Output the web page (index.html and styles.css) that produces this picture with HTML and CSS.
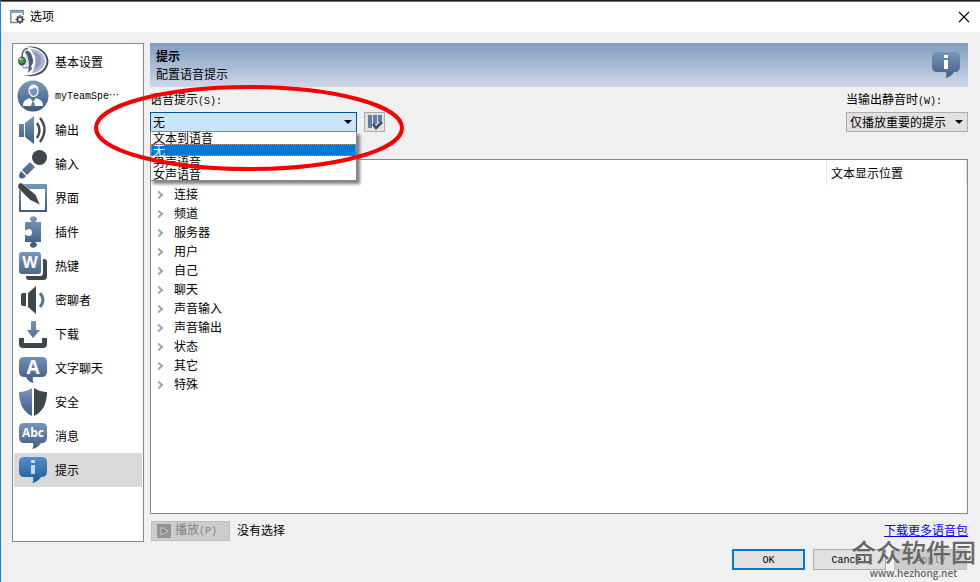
FILE: index.html
```html
<!DOCTYPE html>
<html lang="zh-CN">
<head>
    <meta charset="UTF-8">
    <meta name="viewport" content="width=device-width, initial-scale=1.0">
    <title>选项</title>
    <link rel="stylesheet" href="styles.css">
</head>
<body>
    <svg class="defs" aria-hidden="true">
        <defs>
            <linearGradient id="blue" x1="0" y1="0" x2="0" y2="32" gradientUnits="userSpaceOnUse">
                <stop offset="0" stop-color="#7d9bc1"/>
                <stop offset="1" stop-color="#39597b"/>
            </linearGradient>
            <linearGradient id="bright" x1="0" y1="0" x2="0" y2="32" gradientUnits="userSpaceOnUse">
                <stop offset="0" stop-color="#5b96cd"/>
                <stop offset="1" stop-color="#15548e"/>
            </linearGradient>
        </defs>
    </svg>

    <div class="window">
        <header class="titlebar">
            <svg class="title-icon" viewBox="0 0 15 14">
                <path d="M7 12.5H.8V.8h12.4V5" fill="none" stroke="#6485aa" stroke-width="1.4"/>
                <path d="M1 1h12v2H1z" fill="#8aa4c3"/>
                <circle cx="10" cy="9.5" r="2.5" fill="none" stroke="#414a50" stroke-width="1.6"/>
                <path d="M10 5v1.5M10 12.5V14M5.5 9.5H7M13 9.5h1.5M7 6.5l1 1M12 11.5l1 1M13 6.5l-1 1M8 11.5l-1 1" stroke="#414a50" stroke-width="1.5"/>
            </svg>
            <span class="title-text">选项</span>
            <button class="close" type="button" aria-label="关闭">
                <svg viewBox="0 0 12 12"><path d="M1 1l10 10M11 1L1 11" stroke="#000" stroke-width="1.1"/></svg>
            </button>
        </header>

        <div class="content">
            <nav class="sidebar">
                <button class="item" type="button">
                    <svg viewBox="0 0 32 32">
                        <path d="M10 1C20-1 31 5 31.500 15c0 11-12 18-25 14 12 1 23-4 23-14C29 6 20 1 10 1z" fill="#434d54"/>
                        <path d="M13 3c9 0 15 5 15 12 0 6-5 11-13 12l2-5c2-6 2-13-4-19z" fill="#aeb3cf"/>
                        <path d="M16 6c6 1 9 5 8 10-1 4-4 6-7 7 3-6 3-12-1-17z" fill="#8d96b8"/>
                        <path d="M5 11C5 5 8 2 11 2.500" fill="none" stroke="#59697c" stroke-width="1.500"/>
                        <path d="M8 6c2-3 6 0 7 4 1 3 2 6 0 9l-1 1 1 3-4 4c1-7 2-13-3-21z" fill="#4c5c70"/>
                        <path d="M9 8c2 4 1 9 0 14" fill="none" stroke="#c9cee0" stroke-width="1.500"/>
                        <ellipse cx="5" cy="15" rx="4" ry="4.500" fill="#46504f"/>
                        <circle cx="4.500" cy="14.500" r="3" fill="#38a349"/>
                        <circle cx="3.500" cy="13" r="1.200" fill="#b6e4b1"/>
                        <path d="M5 19c1 3 3 4 7 2" fill="none" stroke="#59697c"/>
                    </svg>
                    <span>基本设置</span>
                </button>
                <button class="item" type="button">
                    <svg viewBox="0 0 32 32">
                        <circle cx="16" cy="16" r="15.5" fill="url(#blue)"/>
                        <path d="M12 10c0-6 9-6 9 0 0 4-2 6-4 6.500-3 0-5-3-5-6.500z" fill="#7895b9" stroke="#fff" stroke-width="1.2"/>
                        <path d="M12 9c3 1 5-1 6-2 1 2 2 2 3 2-1-6-8-6-9 0z" fill="#fff"/>
                        <path d="M6 26c0-5 2-6 7-8l3 4 3-4c5 2 7 3 7 8z" fill="#fff"/>
                        <path d="M15 22h2l1 4h-4z" fill="#5b7ca3"/>
                    </svg>
                    <span class="latin">myTeamSpe&#8943;</span>
                </button>
                <button class="item" type="button">
                    <svg viewBox="0 0 32 32">
                        <path d="M2 10h5v13H2zM8 9l9-7v28l-9-7z" fill="url(#blue)"/>
                        <path d="M20 9q5 7 0 15M23 4q9 11 0 24" fill="none" stroke="#41494d" stroke-width="2.4"/>
                    </svg>
                    <span>输出</span>
                </button>
                <button class="item" type="button">
                    <svg viewBox="0 0 32 32">
                        <circle cx="22.5" cy="9.5" r="7.5" fill="#3f474b"/>
                        <path d="M13 14l5 5-8 8-5-5z" fill="url(#blue)"/>
                        <path d="M4 23l5 5-1 1c-4 4-8-1-5-4z" fill="#446486"/>
                    </svg>
                    <span>输入</span>
                </button>
                <button class="item" type="button">
                    <svg viewBox="0 0 32 32">
                        <path d="M2 2h28v28H2zM4 7v21h24V7z" fill="url(#blue)" fill-rule="evenodd"/>
                        <path d="M1 4c0-3 3-4 5-2l13 11 4 10-10-5L2 7C1 6 1 5 1 4z" fill="#3f474b" stroke="#fff" stroke-width=".5"/>
                    </svg>
                    <span>界面</span>
                </button>
                <button class="item" type="button">
                    <svg viewBox="0 0 32 32">
                        <path d="M8 6h6c1-1 0-1-1-2-1-5 8-5 7 0-1 1-2 1-1 2h5v20h-5c-1 1 0 1 1 2 0 5-8 5-7 0 1-1 2-1 1-2H8v-7c1-1 2 1 4 1 4 0 4-7 0-7-2 0-3 2-4 1z" fill="url(#blue)"/>
                    </svg>
                    <span>插件</span>
                </button>
                <button class="item" type="button">
                    <svg viewBox="0 0 32 32">
                        <path d="M26 9h1c2 0 3 1 3 3v14c0 3-1 4-4 4H12c-2 0-3-1-3-3v-1h14c2 0 3-1 3-3z" fill="#3f474b"/>
                        <rect x="2" y="2" width="22" height="22" rx="3" fill="url(#blue)"/>
                        <text class="glyph" x="13" y="18" font-size="16">W</text>
                    </svg>
                    <span>热键</span>
                </button>
                <button class="item" type="button">
                    <svg viewBox="0 0 32 32">
                        <path d="M6 9h3v13H6q-2 0-2-2v-9q0-2 2-2zM11 9l8-7v28l-8-7z" fill="#3f474b"/>
                        <path d="M23 9q6 7 0 14" fill="none" stroke="#54759b" stroke-width="3"/>
                    </svg>
                    <span>密聊者</span>
                </button>
                <button class="item" type="button">
                    <svg viewBox="0 0 32 32">
                        <path d="M14 4q0-1 1-1h3q1 0 1 1v8h4l-7 8-6-8h4z" fill="url(#blue)"/>
                        <path d="M2 20h5v5h18v-5h5v6q0 4-4 4H6q-4 0-4-4z" fill="#3f474b"/>
                    </svg>
                    <span>下载</span>
                </button>
                <button class="item" type="button">
                    <svg viewBox="0 0 32 32">
                        <path d="M7 5h18q5 0 5 5v9q0 6-5 6h-9q-1 4 1 6-6-1-8-6H7q-5 0-5-6v-9q0-5 5-5z" fill="url(#blue)"/>
                        <text class="glyph" x="16" y="22" font-size="19">A</text>
                    </svg>
                    <span>文字聊天</span>
                </button>
                <button class="item" type="button">
                    <svg viewBox="0 0 32 32">
                        <path d="M15 2v28C6 26 2 17 2 6q7 0 13-4z" fill="url(#blue)"/>
                        <path d="M17 2v28c9-4 13-13 13-24q-7 0-13-4z" fill="#3f474b"/>
                    </svg>
                    <span>安全</span>
                </button>
                <button class="item" type="button">
                    <svg viewBox="0 0 32 32">
                        <path d="M7 3h18q5 0 5 5v9q0 6-5 6h-1q-3 5-9 6 2-2 1-6H7q-5 0-5-6V8q0-5 5-5z" fill="url(#blue)"/>
                        <text class="glyph" x="16" y="17" font-size="12">Abc</text>
                    </svg>
                    <span>消息</span>
                </button>
                <button class="item selected" type="button">
                    <svg viewBox="0 0 32 32">
                        <path d="M7 3h18q5 0 5 5v9q0 6-5 6h-1q-3 5-9 6 2-2 1-6H7q-5 0-5-6V8q0-5 5-5z" fill="url(#bright)"/>
                        <path d="M14 6h4v3h-4zM14 11h4v9h-4z" fill="#b9dcf8"/>
                    </svg>
                    <span>提示</span>
                </button>
            </nav>

            <main class="panel">
                <div class="banner">
                    <div class="banner-text">
                        <h1>提示</h1>
                        <p>配置语音提示</p>
                    </div>
                    <svg class="banner-icon" viewBox="0 0 32 32">
                        <path d="M7 3h18q5 0 5 5v9q0 6-5 6h-1q-3 5-9 6 2-2 1-6H7q-5 0-5-6V8q0-5 5-5z" fill="url(#blue)"/>
                        <path d="M14 6h4v3h-4zM14 11h4v9h-4z" fill="#fff"/>
                    </svg>
                </div>

                <div class="options">
                    <div class="field">
                        <label for="pack">语音提示<span class="latin">(S):</span></label>
                        <div class="pack-row">
                            <div class="combo open">
                                <select id="pack">
                                    <option>文本到语音</option>
                                    <option selected>无</option>
                                    <option>男声语音</option>
                                    <option>女声语音</option>
                                </select>
                                <ul class="dropdown">
                                    <li>文本到语音</li>
                                    <li class="active">无</li>
                                    <li>男声语音</li>
                                    <li>女声语音</li>
                                </ul>
                            </div>
                            <button class="tool" type="button" aria-label="应用语音包">
                                <svg viewBox="0 0 16 16">
                                    <path d="M1 1h4v13H1zM6 1h4v9H6zM11 1h4v7h-4z" fill="#5f7fa5"/>
                                    <path d="M6 10l3 4 6-6" fill="none" stroke="#3f474b" stroke-width="2.5"/>
                                </svg>
                            </button>
                            <svg class="marker" viewBox="0 0 310 86" aria-hidden="true">
                                <ellipse cx="155" cy="43" rx="153" ry="41" fill="none" stroke="#f80000" stroke-width="4"/>
                            </svg>
                        </div>
                    </div>
                    <div class="field">
                        <label for="muted">当输出静音时<span class="latin">(W):</span></label>
                        <div class="combo">
                            <select id="muted">
                                <option>仅播放重要的提示</option>
                            </select>
                        </div>
                    </div>
                </div>

                <div class="tree">
                    <div class="tree-head">
                        <span class="col-name"></span>
                        <span class="col-text"></span>
                        <span class="col-place">文本显示位置</span>
                    </div>
                    <ul class="tree-rows">
                        <li>连接</li>
                        <li>频道</li>
                        <li>服务器</li>
                        <li>用户</li>
                        <li>自己</li>
                        <li>聊天</li>
                        <li>声音输入</li>
                        <li>声音输出</li>
                        <li>状态</li>
                        <li>其它</li>
                        <li>特殊</li>
                    </ul>
                </div>

                <div class="playbar">
                    <button class="play" type="button" disabled>
                        <svg viewBox="0 0 14 14">
                            <path d="M0 0h14v14H0z" fill="#949494"/>
                            <path d="M4 3l7 4-7 4z" fill="#858585" stroke="#c8c8c8"/>
                        </svg>
                        <span>播放<span class="latin">(P)</span></span>
                    </button>
                    <span>没有选择</span>
                    <a class="more" href="#">下载更多语音包</a>
                </div>
            </main>
        </div>

        <footer class="actions">
            <button class="btn default" type="button">OK</button>
            <button class="btn" type="button">Cancel</button>
            <button class="btn" type="button" disabled>Apply</button>
        </footer>

        <div class="watermark">
            <div class="mark-name">合众软件园</div>
            <div class="mark-url">www.hezhong.net</div>
        </div>
    </div>
</body>
</html>
```
FILE: styles.css
```css
* {
    box-sizing: border-box;
}

body {
    margin: 0;
    background: #f0f0f0;
    color: #000;
    font-family: "Liberation Sans", "Noto Sans CJK SC", sans-serif;
    font-size: 12px;
    line-height: 16px;
}

button, select {
    font: inherit;
    color: inherit;
}

ul, h1, p {
    margin: 0;
    padding: 0;
    list-style: none;
}

svg {
    display: block;
    flex: none;
}

.defs {
    position: absolute;
    width: 0;
    height: 0;
}

.latin {
    font-family: "Liberation Mono", "Noto Sans CJK SC", monospace;
    font-size: 10px;
}

.window {
    position: relative;
    display: flex;
    flex-direction: column;
    min-height: 100vh;
    border-top: 1px solid #1b1f2b;
    border-left: 1px solid #1883d7;
}

/* title bar */
.titlebar {
    display: flex;
    align-items: center;
    height: 31px;
    padding: 0 10px 0 9px;
    border-top: 1px solid #1883d7;
    background: #fff;
}

.title-icon {
    width: 15px;
    height: 14px;
}

.title-text {
    flex: 1;
    padding-left: 5px;
}

.close {
    padding: 0;
    border: 0;
    background: none;
}

.close svg {
    width: 12px;
    height: 12px;
}

.content {
    display: flex;
    flex: 1;
    gap: 6px;
    padding: 11px 12px 7px 11px;
}

/* category list */
.sidebar {
    flex: none;
    width: 132px;
    padding: 1px;
    border: 1px solid #828790;
    background: #fff;
}

.item {
    display: flex;
    align-items: center;
    gap: 6px;
    width: 100%;
    height: 34px;
    padding: 0 3px;
    border: 0;
    background: none;
    text-align: left;
    white-space: nowrap;
}

.item span {
    padding-top: 2px;
}

.item svg {
    width: 32px;
    height: 32px;
}

.item.selected {
    background: #d9d9d9;
}

.glyph {
    fill: #fff;
    font-family: "Open Sans", sans-serif;
    font-weight: bold;
    text-anchor: middle;
}

/* right side */
.panel {
    display: flex;
    flex: 1;
    flex-direction: column;
    min-width: 0;
}

.banner {
    display: flex;
    align-items: center;
    justify-content: space-between;
    height: 44px;
    padding: 0 6px;
    background: linear-gradient(#819dc0, #cdd8e7);
}

.banner-text {
    padding-top: 2px;
    line-height: 18px;
}

.banner h1 {
    font-size: 12px;
}

.banner-icon {
    width: 32px;
    height: 32px;
}

.options {
    display: flex;
    justify-content: space-between;
    padding-bottom: 27px;
}

.field label {
    display: block;
    height: 25px;
    line-height: 26px;
}

.pack-row {
    position: relative;
    display: flex;
    gap: 7px;
}

.combo {
    position: relative;
    width: 122px;
}

.combo select {
    display: block;
    width: 100%;
    height: 20px;
    padding: 2px 3px 0;
    border: 1px solid #adadad;
    border-radius: 0;
    background: #e1e1e1;
    appearance: none;
}

.combo::after {
    content: "";
    position: absolute;
    top: 8px;
    right: 5px;
    border: 4px solid transparent;
    border-top-color: #000;
    border-bottom: 0;
    pointer-events: none;
}

.combo.open {
    width: 207px;
}

.combo.open select {
    padding-left: 2px;
    border-color: #005499;
    background: #cce4f7;
}

.dropdown {
    position: absolute;
    z-index: 1;
    top: 19px;
    left: 0;
    width: 100%;
    border: 1px solid #828790;
    background: #fff;
    box-shadow: 3px 3px 3px #808080;
}

.dropdown li {
    height: 12px;
    padding: 0 2px;
    line-height: 14px;
}

.dropdown .active {
    background: #0078d7;
    outline: 1px dotted #ff8728;
    outline-offset: -1px;
    color: #fff;
}

.tool {
    display: grid;
    place-items: center;
    width: 21px;
    height: 20px;
    padding: 0;
    border: 1px solid #adadad;
    background: #e1e1e1;
}

.tool svg {
    width: 16px;
    height: 16px;
}

.marker {
    position: absolute;
    z-index: 2;
    top: -27px;
    left: -56px;
    width: 310px;
    height: 86px;
    pointer-events: none;
}

/* notification tree */
.tree {
    flex: 1;
    border: 1px solid #828790;
    background: #fff;
}

.tree-head {
    display: flex;
    height: 25px;
    line-height: 28px;
}

.tree-head span {
    border-right: 1px solid #e5e5e5;
}

.col-name, .col-place {
    width: 140px;
}

.col-text {
    flex: 1;
}

.col-place {
    padding-left: 4px;
}

.tree-rows li {
    display: flex;
    align-items: center;
    gap: 12px;
    height: 19px;
    padding-left: 5px;
}

.tree-rows li::before {
    content: "";
    width: 4px;
    height: 4px;
    border: solid #a6a6a6;
    border-width: 2px 2px 0 0;
    transform: rotate(45deg);
}

.playbar {
    display: flex;
    align-items: center;
    gap: 7px;
    padding: 7px 0 1px 1px;
}

.play {
    display: flex;
    align-items: center;
    gap: 4px;
    width: 79px;
    height: 20px;
    padding: 0 5px;
    border: 1px solid #bfbfbf;
    background: #ccc;
    color: #838383;
}

.play svg {
    width: 14px;
    height: 14px;
}

.more {
    margin-left: auto;
    color: #00f;
}

/* dialog buttons */
.actions {
    display: flex;
    justify-content: flex-end;
    gap: 8px;
    padding: 0 13px 12px;
}

.btn {
    width: 73px;
    height: 21px;
    padding: 2px 0 0;
    border: 1px solid #adadad;
    background: #e1e1e1;
    font-family: "Liberation Mono", monospace;
    font-size: 10px;
}

.btn.default {
    border: 2px solid #0078d7;
}

.btn:disabled {
    border-color: #bfbfbf;
    background: #ccc;
    color: #838383;
}

.watermark {
    position: absolute;
    right: 4px;
    bottom: 2px;
    color: #666;
    text-align: center;
    pointer-events: none;
}

.mark-name {
    font-size: 25px;
    font-weight: 500;
    line-height: 26px;
}

.mark-url {
    font-family: "Open Sans", sans-serif;
    font-size: 10px;
    font-weight: 600;
    line-height: 14px;
}
```
